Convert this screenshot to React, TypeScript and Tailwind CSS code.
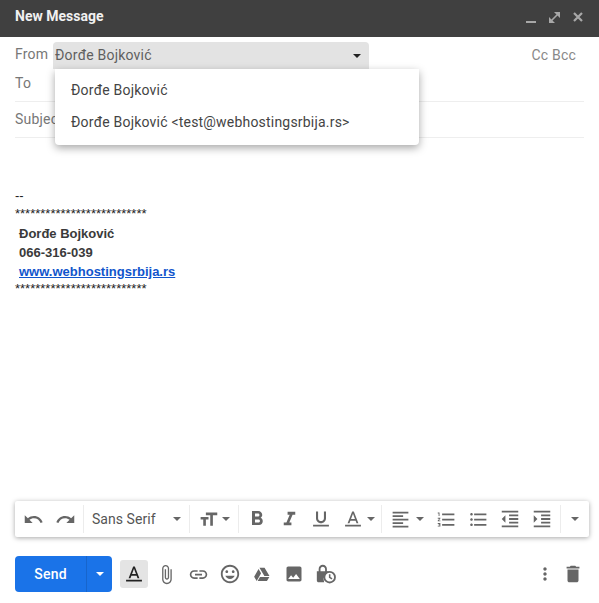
const GRAY = '#666666';

function Icon({ d, size = 20, color = GRAY }: { d: string; size?: number; color?: string }) {
  return (
    <svg width={size} height={size} viewBox="0 0 24 24" fill={color} className="block shrink-0">
      <path d={d} />
    </svg>
  );
}

function Caret({ color = '#666666' }: { color?: string }) {
  return (
    <svg width="8" height="4" viewBox="0 0 8 4" fill={color} className="block shrink-0">
      <path d="M0 0h8L4 4z" />
    </svg>
  );
}

function Sep() {
  return <div className="w-px h-[28px] bg-[#ececec] shrink-0" />;
}

function ToolIcon({ d, size = 20 }: { d: string; size?: number }) {
  return (
    <div className="w-[32px] h-full flex items-center justify-center shrink-0">
      <Icon d={d} size={size} />
    </div>
  );
}

const paths = {
  undo: 'M12.5 8c-2.65 0-5.05.99-6.9 2.6L2 7v9h9l-3.62-3.62c1.39-1.16 3.16-1.88 5.12-1.88 3.54 0 6.55 2.31 7.6 5.5l2.37-.78C21.08 11.03 17.15 8 12.5 8z',
  redo: 'M18.4 10.6C16.55 8.99 14.15 8 11.5 8c-4.65 0-8.58 3.03-9.96 7.22L3.9 16c1.05-3.19 4.05-5.5 7.6-5.5 1.95 0 3.73.72 5.12 1.88L13 16h9V7l-3.6 3.6z',
  size: 'M9 4v3h5v12h3V7h5V4H9zm-6 8h3v7h3v-7h3V9H3v3z',
  bold: 'M15.6 10.79c.97-.67 1.65-1.77 1.65-2.79 0-2.26-1.75-4-4-4H7v14h7.04c2.09 0 3.71-1.7 3.71-3.79 0-1.52-.86-2.82-2.15-3.42zM10 6.5h3c.83 0 1.5.67 1.5 1.5s-.67 1.5-1.5 1.5h-3v-3zm3.5 9H10v-3h3.5c.83 0 1.5.67 1.5 1.5s-.67 1.5-1.5 1.5z',
  italic: 'M10 4v3h2.21l-3.42 8H6v3h8v-3h-2.21l3.42-8H18V4z',
  underline: 'M12 17c3.31 0 6-2.69 6-6V3h-2.5v8c0 1.93-1.57 3.5-3.5 3.5S8.5 12.93 8.5 11V3H6v8c0 3.31 2.69 6 6 6zM2.5 19v2h19v-2z',
  textColor: 'M11 3L5.5 17h2.25l1.12-3h6.25l1.12 3h2.25L13 3h-2zm-1.38 9L12 5.67 14.38 12H9.62zM2.5 19h19v2h-19z',
  align: 'M15 15H3v2h12v-2zm0-8H3v2h12V7zM3 13h18v-2H3v2zm0 8h18v-2H3v2zM3 3v2h18V3H3z',
  numbered: 'M2 17h2v.5H3v1h1v.5H2v1h3v-4H2v1zm1-9h1V4H2v1h1v3zm-1 3h1.8L2 13.1v.9h3v-1H3.2L5 10.9V10H2v1zm5-6v2h14V5H7zm0 14h14v-2H7v2zm0-6h14v-2H7v2z',
  bullets: 'M4 10.5c-.83 0-1.5.67-1.5 1.5s.67 1.5 1.5 1.5 1.5-.67 1.5-1.5-.67-1.5-1.5-1.5zm0-6c-.83 0-1.5.67-1.5 1.5S3.17 7.5 4 7.5 5.5 6.83 5.5 6 4.83 4.5 4 4.5zm0 12c-.83 0-1.5.68-1.5 1.5s.68 1.5 1.5 1.5 1.5-.68 1.5-1.5-.67-1.5-1.5-1.5zM7 19h14v-2H7v2zm0-6h14v-2H7v2zm0-8v2h14V5H7z',
  outdent: 'M11 17h10v-2H11v2zm-8-5l4 4V8l-4 4zm0 9h18v-2H3v2zM3 3v2h18V3H3zm8 6h10V7H11v2zm0 4h10v-2H11v2z',
  indent: 'M3 21h18v-2H3v2zM3 8v8l4-4-4-4zm8 9h10v-2H11v2zM3 3v2h18V3H3zm8 6h10V7H11v2zm0 4h10v-2H11v2z',
  attach: 'M16.5 6v11.5c0 2.21-1.79 4-4 4s-4-1.79-4-4V5c0-1.38 1.12-2.5 2.5-2.5s2.5 1.12 2.5 2.5v10.5c0 .55-.45 1-1 1s-1-.45-1-1V6H10v9.5c0 1.38 1.12 2.5 2.5 2.5s2.5-1.12 2.5-2.5V5c0-2.21-1.79-4-4-4S7 2.79 7 5v12.5c0 3.04 2.46 5.5 5.5 5.5s5.5-2.46 5.5-5.5V6h-1.5z',
  link: 'M3.9 12c0-1.71 1.39-3.1 3.1-3.1h4V7H7c-2.76 0-5 2.24-5 5s2.24 5 5 5h4v-1.9H7c-1.71 0-3.1-1.39-3.1-3.1zM8 13h8v-2H8v2zm9-6h-4v1.9h4c1.71 0 3.1 1.39 3.1 3.1s-1.39 3.1-3.1 3.1h-4V17h4c2.76 0 5-2.24 5-5s-2.24-5-5-5z',
  emoji: 'M11.99 2C6.47 2 2 6.48 2 12s4.47 10 9.99 10C17.52 22 22 17.52 22 12S17.52 2 11.99 2zM12 20c-4.42 0-8-3.58-8-8s3.58-8 8-8 8 3.58 8 8-3.58 8-8 8zm3.5-9c.83 0 1.5-.67 1.5-1.5S16.33 8 15.5 8 14 8.67 14 9.5s.67 1.5 1.5 1.5zm-7 0c.83 0 1.5-.67 1.5-1.5S9.33 8 8.5 8 7 8.67 7 9.5 7.67 11 8.5 11zm3.5 6.5c2.33 0 4.31-1.46 5.11-3.5H6.89c.8 2.04 2.78 3.5 5.11 3.5z',
  drive: 'M8.6 3.5h6.8l6.6 11h-6.8zM7.4 5.4L1.5 15.6l3.4 5.6 5.9-10.1zM9.3 15.9l-3.1 5.3h12.4l3.2-5.3z',
  image: 'M21 19V5c0-1.1-.9-2-2-2H5c-1.1 0-2 .9-2 2v14c0 1.1.9 2 2 2h14c1.1 0 2-.9 2-2zM8.5 13.5l2.5 3.01L14.5 12l4.5 6H5l3.5-4.5z',
  more: 'M12 8c1.1 0 2-.9 2-2s-.9-2-2-2-2 .9-2 2 .9 2 2 2zm0 2c-1.1 0-2 .9-2 2s.9 2 2 2 2-.9 2-2-.9-2-2-2zm0 6c-1.1 0-2 .9-2 2s.9 2 2 2 2-.9 2-2-.9-2-2-2z',
  trash: 'M6 19c0 1.1.9 2 2 2h8c1.1 0 2-.9 2-2V7H6v12zM19 4h-3.5l-1-1h-5l-1 1H5v2h14V4z',
};

function LockClock() {
  return (
    <svg width="22" height="22" viewBox="0 0 24 24" className="block shrink-0">
      <path fill={GRAY} d="M2 9h2V6.5C4 4 6 2 8.5 2S13 4 13 6.5V9h2v2a7 7 0 0 0-5 10H4c-1.1 0-2-.9-2-2zm4 0h5V6.5C11 5.1 9.9 4 8.5 4S6 5.1 6 6.5z" />
      <circle cx="16" cy="15.5" r="5.8" fill="#fff" stroke={GRAY} strokeWidth="2" />
      <path d="M16 12.2v3.5l2.6 1.6" fill="none" stroke={GRAY} strokeWidth="1.7" />
    </svg>
  );
}

export default function App() {
  return (
    <div className="relative w-[599px] h-[603px] overflow-hidden bg-white font-['Roboto',sans-serif] flex flex-col">
      {/* title bar */}
      <div className="h-[37px] bg-[#404040] flex items-center pl-[15px] pr-[11px] shrink-0">
        <span className="flex-1 text-[14px] font-bold text-[#f1f1f1] pb-[4px]">New Message</span>
        <svg width="64" height="14" viewBox="0 0 64 14" className="block mb-[3px]" fill="none" stroke="#a8a8a8" strokeWidth="2">
          <path d="M2 12h10" />
          <path d="M26 12l9-9" strokeWidth="1.6" />
          <path d="M30 2h6v6zM25 7v6h6z" fill="#a8a8a8" stroke="none" />
          <path d="M50 3l8 8M58 3l-8 8" strokeWidth="2.2" />
        </svg>
      </div>

      {/* recipients */}
      <div className="pl-[15px] pr-[15px] shrink-0 text-[14px] tracking-[0.2px]">
        <div className="h-[32px] flex items-center">
          <span className="w-[38px] text-[#777777] pt-[3px]">From</span>
          <div className="w-[316px] h-[27px] mt-[5px] pl-[2px] pr-[8px] bg-[#e3e3e3] rounded-t-[4px] flex items-center justify-between text-[#5f5f5f]">
            <span>Đorđe Bojković</span>
            <Caret color="#222222" />
          </div>
          <span className="ml-auto pr-[8px] pt-[5px] text-[#888888]">Cc Bcc</span>
        </div>
        <div className="h-[33px] flex items-center border-b border-[#eeeeee] text-[#777777]">
          <span className="pb-[4px]">To</span>
        </div>
        <div className="h-[36px] flex items-center border-b border-[#eeeeee] text-[#777777]">
          <span>Subject</span>
        </div>
      </div>

      {/* from dropdown */}
      <div className="absolute left-[55px] top-[69px] w-[364px] h-[76px] bg-white rounded-b-[4px] shadow-[0_3px_8px_rgba(0,0,0,0.35)] py-[5px] text-[14px] tracking-[0.2px] text-[#444444]">
        <div className="h-[32px] pl-[16px] flex items-center">Đorđe Bojković</div>
        <div className="h-[32px] pl-[16px] flex items-center">{'Đorđe Bojković <test@webhostingsrbija.rs>'}</div>
      </div>

      {/* body */}
      <div className="flex-1 min-h-0 pl-[15px] pt-[50px] font-['Liberation_Sans',Arial,sans-serif] text-[13px] text-[#222222]">
        <div className="h-[17px] leading-[15px]">--</div>
        <div className="h-[15px] leading-[15px] mb-[4px] pt-[1px] whitespace-nowrap">**************************</div>
        <div className="pl-[4px] font-bold text-[#3a3a3a]">
          <div className="h-[19px] leading-[19px]">Đorđe Bojković</div>
          <div className="h-[19px] leading-[19px]">066-316-039</div>
          <div className="h-[19px] leading-[19px] text-[#1155cc] underline">www.webhostingsrbija.rs</div>
        </div>
        <div className="h-[15px] leading-[15px] whitespace-nowrap">**************************</div>
      </div>

      {/* formatting toolbar */}
      <div className="mx-[15px] w-[574px] h-[36px] bg-white rounded-[2px] shadow-[0_1px_5px_rgba(0,0,0,0.35)] flex items-center pl-[2px] shrink-0 mb-[19px]">
        <ToolIcon d={paths.undo} size={21} />
        <ToolIcon d={paths.redo} size={21} />
        <div className="w-[2px]" />
        <Sep />
        <div className="w-[105px] flex items-center pl-[8px] pr-[8px] justify-between text-[14px] text-[#555555] tracking-[0.05px]">
          <span>Sans Serif</span>
          <Caret />
        </div>
        <Sep />
        <div className="w-[48px] flex items-center pl-[8px] gap-[3px]">
          <Icon d={paths.size} size={21} />
          <Caret />
        </div>
        <Sep />
        <div className="w-[2px]" />
        <ToolIcon d={paths.bold} size={24} />
        <ToolIcon d={paths.italic} size={23} />
        <ToolIcon d={paths.underline} />
        <div className="w-[44px] flex items-center pl-[6px] gap-[4px]">
          <Icon d={paths.textColor} />
          <Caret />
        </div>
        <Sep />
        <div className="w-[48px] flex items-center pl-[8px] gap-[5px]">
          <Icon d={paths.align} size={21} />
          <Caret />
        </div>
        <ToolIcon d={paths.numbered} size={21} />
        <ToolIcon d={paths.bullets} size={21} />
        <ToolIcon d={paths.outdent} size={22} />
        <ToolIcon d={paths.indent} size={22} />
        <div className="w-[2px]" />
        <Sep />
        <div className="flex-1 flex justify-center pr-[1px]">
          <Caret />
        </div>
      </div>

      {/* send row */}
      <div className="h-[36px] mb-[11px] pl-[15px] pr-[16px] flex items-center shrink-0">
        <div className="flex h-[36px] w-[97px] rounded-[4px] overflow-hidden bg-[#1a73e8] text-white">
          <div className="w-[72px] flex items-center justify-center text-[14px] font-medium tracking-[0.25px] border-r border-[#1765cc]">Send</div>
          <div className="flex-1 flex items-center justify-center">
            <Caret color="#ffffff" />
          </div>
        </div>
        <div className="ml-[8px] w-[28px] h-[28px] rounded-[3px] bg-[#e4e4e4] flex items-center justify-center">
          <Icon d={paths.textColor} color="#222222" />
        </div>
        <div className="ml-[2px] flex h-[36px]">
          <ToolIcon d={paths.attach} size={21} />
          <ToolIcon d={paths.link} size={21} />
          <ToolIcon d={paths.emoji} size={22} />
          <ToolIcon d={paths.drive} size={18} />
          <ToolIcon d={paths.image} />
          <div className="w-[32px] h-full flex items-center justify-center">
            <LockClock />
          </div>
        </div>
        <div className="ml-auto flex h-[36px] gap-[8px]">
          <div className="w-[20px] h-full flex items-center justify-center">
            <Icon d={paths.more} />
          </div>
          <div className="w-[20px] h-full flex items-center justify-center">
            <Icon d={paths.trash} size={22} />
          </div>
        </div>
      </div>
    </div>
  );
}
